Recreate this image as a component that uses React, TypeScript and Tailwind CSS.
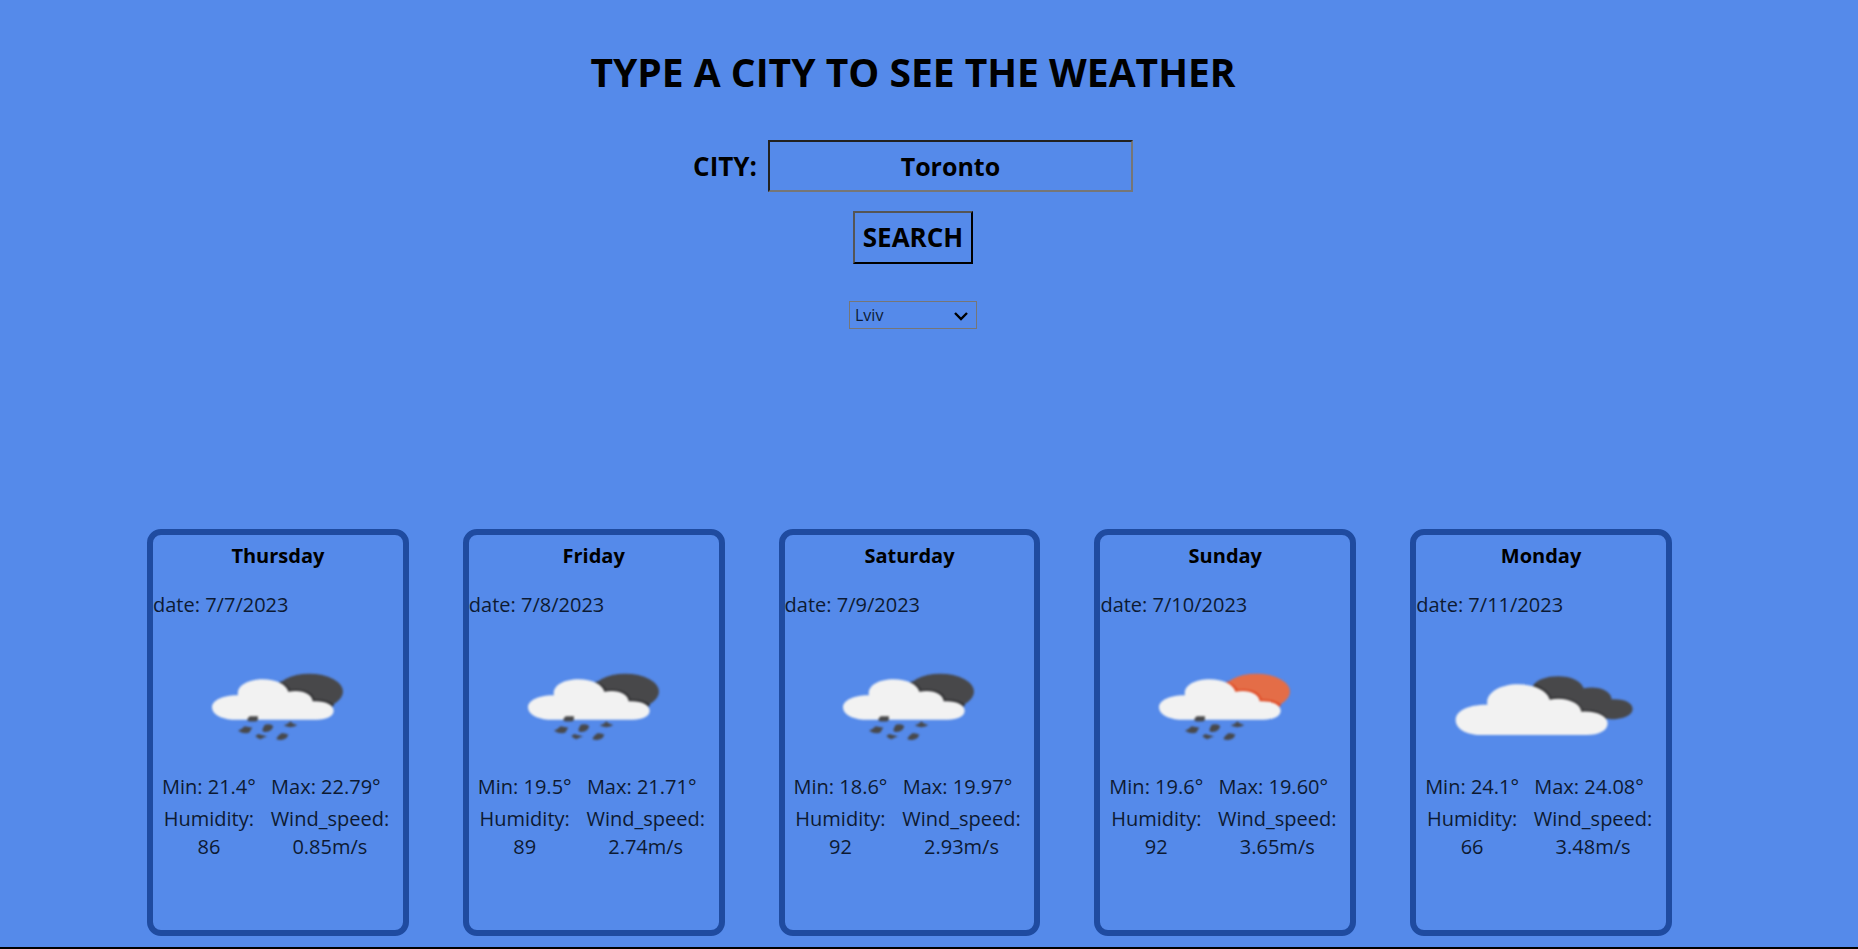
import { useState } from "react";

type Sky = "rain" | "sunRain" | "clouds";

type Forecast = {
  day: string;
  date: string;
  sky: Sky;
  min: string;
  max: string;
  humidity: string;
  wind: string;
};

const forecasts: Forecast[] = [
  { day: "Thursday", date: "7/7/2023", sky: "rain", min: "21.4", max: "22.79", humidity: "86", wind: "0.85" },
  { day: "Friday", date: "7/8/2023", sky: "rain", min: "19.5", max: "21.71", humidity: "89", wind: "2.74" },
  { day: "Saturday", date: "7/9/2023", sky: "rain", min: "18.6", max: "19.97", humidity: "92", wind: "2.93" },
  { day: "Sunday", date: "7/10/2023", sky: "sunRain", min: "19.6", max: "19.60", humidity: "92", wind: "3.65" },
  { day: "Monday", date: "7/11/2023", sky: "clouds", min: "24.1", max: "24.08", humidity: "66", wind: "3.48" },
];

const cities = ["Lviv", "Kyiv", "Kharkiv", "Odesa", "Toronto"];

function RainIcon({ sunny }: { sunny: boolean }) {
  return (
    <svg viewBox="-6 0 540 330" className="h-[110px] w-[180px] blur-[1px]" aria-hidden="true">
      <ellipse cx="358" cy="125" rx="101" ry="54" fill={sunny ? "#e46d47" : "#48484a"} />
      <path
        d="M268 98C285 104 296 114 298 124C338 117 368 130 370 153C395 151 414 156 430 167"
        fill="none"
        stroke={sunny ? "#e04a24" : "#333335"}
        strokeWidth="9"
      />
      <path
        d="M126 209C92 207 66 192 66 172C66 151 100 135 144 136C138 108 172 88 218 88C258 88 290 104 295 125C336 117 367 132 368 154C404 151 431 164 431 182C431 198 410 209 380 209Z"
        fill="#f2f2f2"
      />
      <g fill="#48484a">
        <path d="M179 199H204L203 212Q188 217 172 212Q171 204 179 199Z" />
        <path d="M164 229L187 233Q182 239 179 247Q164 254 144 242Q154 239 164 229Z" />
        <path d="M224 224Q238 221 249 227Q249 238 237 244Q222 249 217 242Q219 232 224 224Z" />
        <path d="M302 214Q306 222 322 225Q313 231 301 232Q289 230 281 226Q294 223 302 214Z" />
        <path d="M205 252Q218 256 231 259Q219 263 211 268Q202 265 196 258Z" />
        <path d="M274 250Q286 248 295 254Q292 264 282 268Q270 272 259 267Q263 257 274 250Z" />
      </g>
    </svg>
  );
}

function CloudsIcon() {
  return (
    <svg viewBox="1 0 660 330" className="h-[110px] w-[220px] blur-[1px]" aria-hidden="true">
      <path
        d="M306 108C318 89 348 79 382 79C420 79 452 93 459 115C502 107 542 122 543 148C579 145 606 158 606 177C606 196 578 208 540 208L440 190L340 150Z"
        fill="#48484a"
      />
      <path d="M312 106C338 117 356 134 358 148C405 139 449 158 452 184C488 182 514 190 526 206" fill="none" stroke="#333335" strokeWidth="9" />
      <path
        d="M150 255C106 255 75 236 75 210C75 182 114 163 170 164C164 130 206 103 262 103C313 103 353 124 357 149C404 139 450 158 452 185C497 181 531 198 531 220C531 242 505 255 468 255Z"
        fill="#f2f2f2"
      />
    </svg>
  );
}

function ForecastCard({ forecast }: { forecast: Forecast }) {
  return (
    <article className="flex min-h-[407px] flex-col rounded-[14px] border-6 border-[#1f4ba0] text-xl leading-7">
      <h2 className="pt-[7px] text-center leading-7 font-bold text-black">{forecast.day}</h2>
      <p className="mt-[21px]">date: {forecast.date}</p>
      <div className="mt-[31px] flex justify-center">
        {forecast.sky === "clouds" ? <CloudsIcon /> : <RainIcon sunny={forecast.sky === "sunRain"} />}
      </div>
      <dl className="mt-[13px] grid grid-cols-[96px_130px] justify-center gap-x-2 gap-y-1 text-center">
        <div className="whitespace-nowrap">
          <dt className="inline">Min:</dt> <dd className="inline">{forecast.min}°</dd>
        </div>
        <div className="pr-2 whitespace-nowrap">
          <dt className="inline">Max:</dt> <dd className="inline">{forecast.max}°</dd>
        </div>
        <div>
          <dt>Humidity:</dt>
          <dd>{forecast.humidity}</dd>
        </div>
        <div>
          <dt>Wind_speed:</dt>
          <dd>{forecast.wind}m/s</dd>
        </div>
      </dl>
    </article>
  );
}

export default function App() {
  const [city, setCity] = useState("Toronto");
  const [preset, setPreset] = useState("Lviv");

  return (
    <main className="flex min-h-screen flex-col border-b-2 border-black bg-[#558aea] font-['Open_Sans','Noto_Sans',sans-serif] text-[#0d1a33]">
      <form className="flex flex-col items-center pt-11 pr-8 text-black" onSubmit={(e) => e.preventDefault()}>
        <h1 className="text-[39px] leading-14 font-bold">TYPE A CITY TO SEE THE WEATHER</h1>
        <div className="mt-10 flex items-center gap-[11px] text-[26px] font-bold">
          <label htmlFor="city">CITY:</label>
          <input
            id="city"
            type="text"
            value={city}
            onChange={(e) => setCity(e.target.value)}
            className="h-[52px] w-[365px] border-2 border-t-[#212121] border-r-[#767676] border-b-[#767676] border-l-[#212121] bg-transparent text-center text-[25px]"
          />
        </div>
        <button
          type="submit"
          className="mt-[19px] h-[53px] border-2 border-t-[#555] border-r-black border-b-black border-l-[#555] px-2 text-[26px] font-bold"
        >
          SEARCH
        </button>
        <div className="relative mt-[37px]">
          <select
            aria-label="City list"
            value={preset}
            onChange={(e) => setPreset(e.target.value)}
            className="h-7 w-32 appearance-none border border-[#767676] bg-transparent pl-[5px] text-base leading-6 text-[#0d1a33]"
          >
            {cities.map((name) => (
              <option key={name}>{name}</option>
            ))}
          </select>
          <svg viewBox="0 0 16 10" className="pointer-events-none absolute top-2.5 right-2 h-2.5 w-4" aria-hidden="true">
            <path d="M2 2L8 8L14 2" fill="none" stroke="black" strokeWidth="2.4" />
          </svg>
        </div>
      </form>
      <section className="mt-auto grid grid-cols-5 gap-[54px] pr-[186px] pb-[11px] pl-[147px]" aria-label="Forecast">
        {forecasts.map((forecast) => (
          <ForecastCard key={forecast.date} forecast={forecast} />
        ))}
      </section>
    </main>
  );
}
